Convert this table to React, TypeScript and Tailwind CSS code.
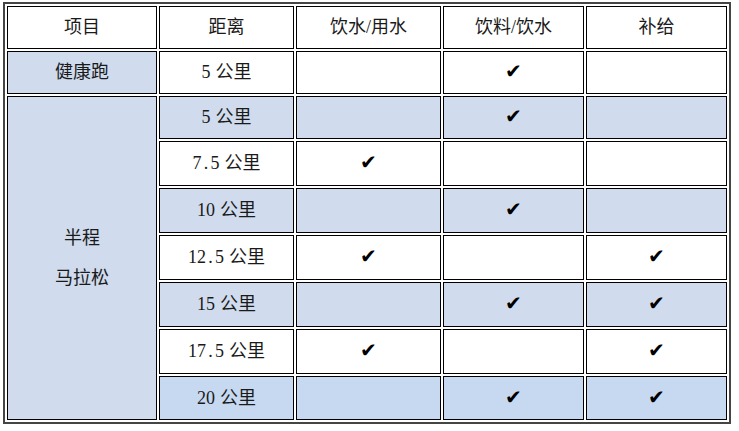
const blue = "bg-[#d0dcee]"
const blueDeep = "bg-[#c6d9f0]"

type Row = {
  num: string
  water: boolean
  drink: boolean
  supply: boolean
  shaded: boolean
  deep?: boolean
  h: string
}

const halfRows: Row[] = [
  { num: "5", water: false, drink: true, supply: false, shaded: true, h: "h-[43px]" },
  { num: "7.5", water: true, drink: false, supply: false, shaded: false, h: "h-[45px]" },
  { num: "10", water: false, drink: true, supply: false, shaded: true, h: "h-[45px]" },
  { num: "12.5", water: true, drink: false, supply: true, shaded: false, h: "h-[45px]" },
  { num: "15", water: false, drink: true, supply: true, shaded: true, h: "h-[45px]" },
  { num: "17.5", water: true, drink: false, supply: true, shaded: false, h: "h-[45px]" },
  { num: "20", water: false, drink: true, supply: true, shaded: true, deep: true, h: "h-[44px]" },
]

// half-width digits, like the original song-style font
function Dist({ num }: { num: string }) {
  return (
    <span className="inline-flex items-baseline">
      {num.split("").map((c, i) => (
        <span key={i} className="inline-block w-[9px] text-center">
          {c}
        </span>
      ))}
      <span className="inline-block w-[5px]" />
      <span>公里</span>
    </span>
  )
}

function Check({ on }: { on: boolean }) {
  if (!on) return null
  return <span className="font-['DejaVu_Sans'] text-[20px] leading-none text-black">✔</span>
}

const cell = "border border-black text-center align-middle p-0"

export default function App() {
  return (
    <div className="pl-[3px] pt-[2px] font-['Liberation_Serif','Noto_Sans_CJK_SC',serif] text-[18px] text-[#1a1a1a]">
      <table className="border-separate border-spacing-[2px] border-2 border-[#454545] bg-white">
        <tbody>
          <tr className="h-[43px]">
            <td className={`${cell} w-[150px]`}>项目</td>
            <td className={`${cell} w-[135px]`}>距离</td>
            <td className={`${cell} w-[145px]`}>饮水/用水</td>
            <td className={`${cell} w-[141px]`}>饮料/饮水</td>
            <td className={`${cell} w-[141px]`}>补给</td>
          </tr>
          <tr className="h-[43px]">
            <td className={`${cell} ${blue}`}>健康跑</td>
            <td className={cell}>
              <Dist num="5" />
            </td>
            <td className={cell}></td>
            <td className={cell}>
              <Check on />
            </td>
            <td className={cell}></td>
          </tr>
          {halfRows.map((r, i) => {
            const bg = r.shaded ? (r.deep ? blueDeep : blue) : "bg-white"
            return (
              <tr key={r.num} className={r.h}>
                {i === 0 && (
                  <td rowSpan={7} className={`${cell} ${blue}`}>
                    <div className="flex flex-col items-center gap-[16px] leading-[24px]">
                      <span>半程</span>
                      <span>马拉松</span>
                    </div>
                  </td>
                )}
                <td className={`${cell} ${bg}`}>
                  <Dist num={r.num} />
                </td>
                <td className={`${cell} ${bg}`}>
                  <Check on={r.water} />
                </td>
                <td className={`${cell} ${bg}`}>
                  <Check on={r.drink} />
                </td>
                <td className={`${cell} ${bg}`}>
                  <Check on={r.supply} />
                </td>
              </tr>
            )
          })}
        </tbody>
      </table>
    </div>
  )
}
